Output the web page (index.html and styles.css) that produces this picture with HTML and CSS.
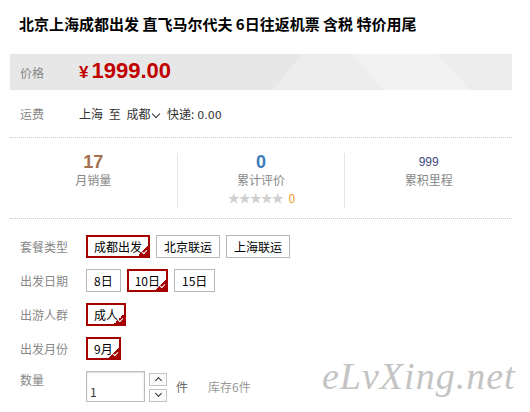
FILE: index.html
```html
<!DOCTYPE html>
<html lang="zh-CN">
<head>
  <meta charset="UTF-8">
  <title>北京上海成都出发 直飞马尔代夫</title>
  <meta name="viewport" content="width=device-width, initial-scale=1.0" />
  <link rel="stylesheet" href="styles.css">
</head>
<body>
  <div class="item">
    <h1 class="title">北京上海成都出发 直飞马尔代夫 6日往返机票 含税 特价用尾</h1>

    <div class="price-bar">
      <span class="label">价格</span>
      <span class="price"><em>¥</em>1999.00</span>
    </div>

    <div class="freight">
      <span class="label">运费</span>
      <span class="route">上海 <span class="to">至</span> 成都<i class="chev"></i> 快递: <span class="num">0.00</span></span>
    </div>

    <ul class="stats">
      <li>
        <strong class="sold">17</strong>
        <span>月销量</span>
      </li>
      <li>
        <strong class="reviews">0</strong>
        <span>累计评价</span>
        <span class="stars">★★★★★ <b>0</b></span>
      </li>
      <li>
        <strong class="miles">999</strong>
        <span>累积里程</span>
      </li>
    </ul>

    <div class="opts">
      <div class="opt">
        <span class="label">套餐类型</span>
        <div class="skus">
          <a class="sku on">成都出发</a>
          <a class="sku">北京联运</a>
          <a class="sku">上海联运</a>
        </div>
      </div>
      <div class="opt">
        <span class="label">出发日期</span>
        <div class="skus">
          <a class="sku">8日</a>
          <a class="sku on">10日</a>
          <a class="sku">15日</a>
        </div>
      </div>
      <div class="opt">
        <span class="label">出游人群</span>
        <div class="skus">
          <a class="sku on">成人</a>
        </div>
      </div>
      <div class="opt">
        <span class="label">出发月份</span>
        <div class="skus">
          <a class="sku on">9月</a>
        </div>
      </div>
      <div class="opt qty">
        <span class="label">数量</span>
        <input class="amount" type="text" value="1" />
        <div class="spin">
          <button type="button" class="up"></button>
          <button type="button" class="down"></button>
        </div>
        <span class="unit">件</span>
        <span class="stock">库存6件</span>
      </div>
    </div>

    <div class="watermark">eLvXing.net</div>
  </div>
</body>
</html>
```

FILE: styles.css
```css
body {
    margin: 0;
    font-family: "Noto Sans CJK SC", "Liberation Sans", sans-serif;
    font-size: 12px;
    color: #333;
    background: #fff;
}

.item {
    position: relative;
    width: 502px;
    padding-left: 10px;
}

.title {
    margin: 0;
    padding: 14px 0 20px 9px;
    font-size: 15px;
    line-height: 20px;
    font-weight: bold;
    color: #000;
}

.label {
    width: 59px;
    color: #888;
    flex: none;
}

.price-bar {
    display: flex;
    align-items: center;
    height: 36px;
    padding-left: 10px;
    background-color: #e7e7e7;
    background-image:
        linear-gradient(48deg, transparent 70%, rgba(255,255,255,.25) 70%, rgba(255,255,255,.25) 86%, transparent 86%),
        linear-gradient(-50deg, rgba(255,255,255,.25) 0, rgba(255,255,255,.25) 45%, transparent 45%);
}

.price {
    font-family: "Liberation Sans", Arial, sans-serif;
    font-size: 22px;
    font-weight: bold;
    color: #c10000;
    line-height: 36px;
}

.price em {
    font-style: normal;
    font-size: 17px;
    margin-right: 3px;
}

.freight {
    display: flex;
    align-items: center;
    height: 47px;
    padding-left: 10px;
    border-bottom: 1px dotted #c8c8c8;
}

.route {
    color: #333;
}

.route .to {
    margin: 0 3px;
}

.route .num {
    font-family: "DejaVu Sans", sans-serif;
    font-size: 11px;
}

.chev {
    display: inline-block;
    width: 5px;
    height: 5px;
    border-right: 1.5px solid #333;
    border-bottom: 1.5px solid #333;
    transform: rotate(45deg);
    margin: 0 5px 4px 3px;
    vertical-align: middle;
}

.stats {
    display: flex;
    list-style: none;
    margin: 0;
    padding: 15px 0 10px;
    border-bottom: 1px dotted #c8c8c8;
}

.stats li {
    flex: 1;
    height: 55px;
    display: flex;
    flex-direction: column;
    align-items: center;
    line-height: 18px;
    color: #888;
}

.stats li + li {
    border-left: 1px solid #e6e6e6;
}

.stats strong {
    font-family: "Liberation Sans", Arial, sans-serif;
    font-size: 18px;
}

.stats .sold {
    color: #a6714f;
}

.stats .reviews {
    color: #3a7cb8;
}

.stats .miles {
    font-weight: normal;
    font-size: 12px;
    color: #3e4a7e;
}

.stars {
    color: #cfcfcf;
    font-size: 12px;
    letter-spacing: -1px;
}

.stars b {
    font-weight: normal;
    color: #f0a030;
    margin-left: 4px;
}

.opts {
    padding: 16px 0 0 10px;
}

.opt {
    display: flex;
    align-items: center;
    margin-bottom: 11px;
}

.opt .label {
    width: 66px;
}

.skus {
    display: flex;
    gap: 6px;
}

.sku {
    position: relative;
    height: 21px;
    line-height: 21px;
    padding: 0 7px;
    border: 1px solid #b8b8b8;
    color: #000;
    cursor: pointer;
}

.sku.on {
    height: 19px;
    line-height: 19px;
    padding: 0 6px;
    border: 2px solid #a40000;
}

.sku.on::after {
    content: "";
    position: absolute;
    right: 0;
    bottom: 0;
    width: 10px;
    height: 10px;
    background: linear-gradient(135deg, transparent 50%, #a40000 50%);
}

.sku.on::before {
    content: "";
    position: absolute;
    z-index: 1;
    right: 1px;
    bottom: 3px;
    width: 4px;
    height: 2px;
    border-left: 1px solid #fff;
    border-bottom: 1px solid #fff;
    transform: rotate(-45deg);
}

.qty {
    align-items: flex-start;
}

.qty .label {
    line-height: 18px;
}

.amount {
    box-sizing: border-box;
    width: 59px;
    height: 31px;
    margin: 0;
    padding: 10px 3px 0;
    border: 1px solid #bbb;
    box-shadow: inset 0 1px 2px #ddd;
    font-family: "Noto Sans CJK SC", sans-serif;
    font-size: 12px;
    color: #333;
}

.spin {
    display: flex;
    flex-direction: column;
    gap: 3px;
    margin: 2px 0 0 4px;
}

.spin button {
    position: relative;
    width: 18px;
    height: 13px;
    padding: 0;
    border: 1px solid #c4c4c4;
    background: #fafafa;
}

.spin button::after {
    content: "";
    position: absolute;
    left: 6px;
    width: 4px;
    height: 4px;
    border-left: 1.5px solid #333;
    border-top: 1.5px solid #333;
}

.spin .up::after {
    top: 4px;
    transform: rotate(45deg);
}

.spin .down::after {
    top: 1px;
    transform: rotate(-135deg);
}

.unit {
    margin: 8px 0 0 9px;
    line-height: 16px;
    color: #666;
}

.stock {
    margin: 8px 0 0 20px;
    line-height: 16px;
    color: #999;
}

.watermark {
    position: absolute;
    left: 322px;
    top: 354px;
    font-family: "Liberation Serif", serif;
    font-style: italic;
    font-size: 38px;
    color: #c4c4c4;
    letter-spacing: 1px;
}
```
